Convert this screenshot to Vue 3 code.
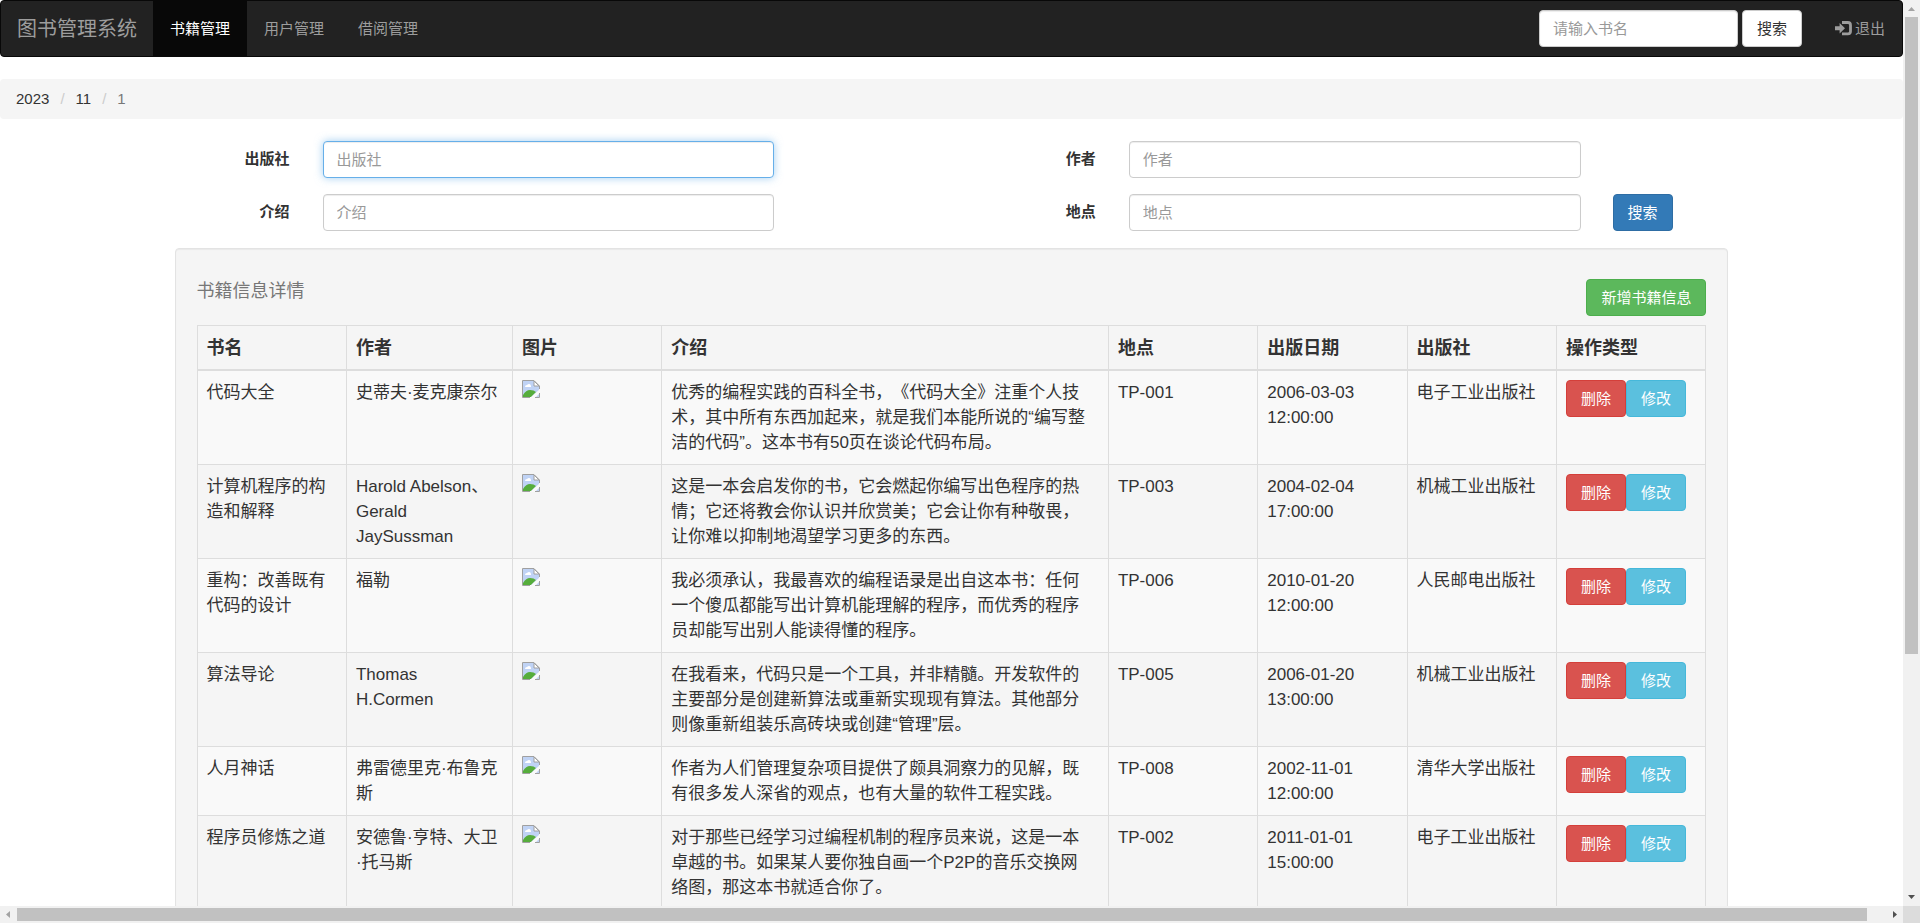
<script setup>
import { ref } from 'vue'

const navItems = ['书籍管理', '用户管理', '借阅管理']
const active = ref('书籍管理')
const crumbs = ['2023', '11', '1']
const keyword = ref('')
const publisher = ref('')
const author = ref('')
const intro = ref('')
const place = ref('')

const headers = ['书名', '作者', '图片', '介绍', '地点', '出版日期', '出版社', '操作类型']
const books = [
  { name: '代码大全', author: '史蒂夫·麦克康奈尔', intro: '优秀的编程实践的百科全书，《代码大全》注重个人技术，其中所有东西加起来，就是我们本能所说的“编写整洁的代码”。这本书有50页在谈论代码布局。', place: 'TP-001', date: '2006-03-03 12:00:00', publisher: '电子工业出版社' },
  { name: '计算机程序的构造和解释', author: 'Harold Abelson、Gerald JaySussman', intro: '这是一本会启发你的书，它会燃起你编写出色程序的热情；它还将教会你认识并欣赏美；它会让你有种敬畏，让你难以抑制地渴望学习更多的东西。', place: 'TP-003', date: '2004-02-04 17:00:00', publisher: '机械工业出版社' },
  { name: '重构：改善既有代码的设计', author: '福勒', intro: '我必须承认，我最喜欢的编程语录是出自这本书：任何一个傻瓜都能写出计算机能理解的程序，而优秀的程序员却能写出别人能读得懂的程序。', place: 'TP-006', date: '2010-01-20 12:00:00', publisher: '人民邮电出版社' },
  { name: '算法导论', author: 'Thomas\nH.Cormen', intro: '在我看来，代码只是一个工具，并非精髓。开发软件的主要部分是创建新算法或重新实现现有算法。其他部分则像重新组装乐高砖块或创建“管理”层。', place: 'TP-005', date: '2006-01-20 13:00:00', publisher: '机械工业出版社' },
  { name: '人月神话', author: '弗雷德里克·布鲁克斯', intro: '作者为人们管理复杂项目提供了颇具洞察力的见解，既有很多发人深省的观点，也有大量的软件工程实践。', place: 'TP-008', date: '2002-11-01 12:00:00', publisher: '清华大学出版社' },
  { name: '程序员修炼之道', author: '安德鲁·亨特、大卫·托马斯', intro: '对于那些已经学习过编程机制的程序员来说，这是一本卓越的书。如果某人要你独自画一个P2P的音乐交换网络图，那这本书就适合你了。', place: 'TP-002', date: '2011-01-01 15:00:00', publisher: '电子工业出版社' }
]
</script>

<template>
  <div class="window">
    <div class="page">
      <nav class="navbar">
        <a class="brand" href="#">图书管理系统</a>
        <a
          v-for="item in navItems"
          :key="item"
          href="#"
          class="nav-link"
          :class="{ active: item === active }"
          @click.prevent="active = item"
        >{{ item }}</a>
        <form class="nav-search" @submit.prevent>
          <input v-model="keyword" class="control" type="text" placeholder="请输入书名" aria-label="书名" />
          <button class="btn btn-default" type="submit">搜索</button>
        </form>
        <a class="nav-link logout" href="#">
          <svg class="logout-icon" viewBox="0 0 17 15" aria-hidden="true">
            <path d="M0 5.200h4.600V2L10 7.200l-5.400 5.200V9.200H0z" fill="currentColor" />
            <path d="M7 1.500h5.800q2.700 0 2.700 2.700v6q0 2.700-2.700 2.700H7" fill="none" stroke="currentColor" stroke-width="2.800" />
          </svg>
          <span>退出</span>
        </a>
      </nav>

      <ol class="breadcrumb">
        <li v-for="(c, i) in crumbs" :key="c">
          <a v-if="i < crumbs.length - 1" href="#">{{ c }}</a>
          <span v-else>{{ c }}</span>
        </li>
      </ol>

      <form class="filters" @submit.prevent>
        <label class="label-first" for="publisher">出版社</label>
        <input id="publisher" v-model="publisher" class="control field-first" type="text" placeholder="出版社" autofocus />
        <label class="label-second" for="author">作者</label>
        <input id="author" v-model="author" class="control field-second" type="text" placeholder="作者" />
        <label class="label-first" for="intro">介绍</label>
        <input id="intro" v-model="intro" class="control field-first" type="text" placeholder="介绍" />
        <label class="label-second" for="place">地点</label>
        <input id="place" v-model="place" class="control field-second" type="text" placeholder="地点" />
        <button class="btn btn-primary" type="submit">搜索</button>
      </form>

      <div class="row">
        <main class="well">
          <header class="well-head">
            <h1>书籍信息详情</h1>
            <button class="btn btn-success" type="button">新增书籍信息</button>
          </header>
          <table>
            <colgroup>
              <col class="narrow" />
              <col class="author" />
              <col class="narrow" />
              <col class="intro" />
              <col class="narrow" />
              <col class="narrow" />
              <col class="narrow" />
              <col class="narrow" />
            </colgroup>
            <thead>
              <tr>
                <th v-for="h in headers" :key="h" scope="col">{{ h }}</th>
              </tr>
            </thead>
            <tbody>
              <tr v-for="b in books" :key="b.name">
                <td>{{ b.name }}</td>
                <td class="author-cell">{{ b.author }}</td>
                <td>
                  <svg class="broken" viewBox="0 0 18 18" aria-hidden="true">
                    <path d="M1 1h11l5 5v11H1z" fill="#c0d3f5" />
                    <path d="M3 7q0-2 2-2 1-1 2-1 2 0 2 3z" fill="#fff" />
                    <path d="M1 17v-2q3-5 7-5 4 0 6 2l-5 5z" fill="#56ad3c" />
                    <path d="M8 18 18 9v4l-5 5z" fill="#fafafa" />
                    <path d="M12 1v5h5z" fill="#fff" stroke="#a0a0a0" />
                    <path d="M8 17.500H.5V.5H12l5.500 5.500v3M17.500 13v4.500H13" fill="none" stroke="#a0a0a0" />
                  </svg>
                </td>
                <td class="intro-cell">{{ b.intro }}</td>
                <td>{{ b.place }}</td>
                <td>{{ b.date }}</td>
                <td>{{ b.publisher }}</td>
                <td>
                  <div class="actions">
                    <button class="btn btn-danger" type="button">删除</button>
                    <button class="btn btn-info" type="button">修改</button>
                  </div>
                </td>
              </tr>
            </tbody>
          </table>
        </main>
      </div>
    </div>

    <div class="bar vertical" aria-hidden="true">
      <svg viewBox="0 0 17 17"><path d="M5 11h7L8.500 7z" fill="#a3a3a3" /></svg>
      <div class="track"><div class="thumb"></div></div>
      <svg viewBox="0 0 17 17"><path d="M5 6h7l-3.500 4z" fill="#505050" /></svg>
    </div>
    <div class="bar horizontal" aria-hidden="true">
      <svg viewBox="0 0 17 17"><path d="M10 5v7L6 8.500z" fill="#a3a3a3" /></svg>
      <div class="track"><div class="thumb"></div></div>
      <svg viewBox="0 0 17 17"><path d="M7 5v7l4-3.500z" fill="#505050" /></svg>
    </div>
    <div class="corner"></div>
  </div>
</template>

<style>
body {
  margin: 0;
  background: #fff;
}
</style>

<style scoped>
* {
  box-sizing: border-box;
}
.window {
  display: grid;
  grid-template-columns: minmax(0, 1fr) 17px;
  grid-template-rows: minmax(0, 1fr) 17px;
  height: 100vh;
  font: 15px/22px "Liberation Sans", "Noto Sans CJK SC", sans-serif;
  text-spacing-trim: space-all;
  color: #333;
}
.page {
  overflow: hidden;
}
a {
  color: #333;
  text-decoration: none;
}
.navbar {
  display: flex;
  align-items: center;
  height: 57px;
  border: 1px solid #080808;
  border-radius: 4px;
  background: #222;
}
.navbar a {
  color: #9d9d9d;
}
.brand {
  padding: 0 16px;
  font-size: 20px;
}
.nav-link {
  padding: 0 17px;
  line-height: 55px;
}
.navbar .active {
  background: #080808;
  color: #fff;
}
.nav-search {
  display: flex;
  gap: 4px;
  margin-left: auto;
  padding-right: 16px;
}
.nav-search .control {
  width: 199px;
}
.logout {
  display: flex;
  align-items: center;
  gap: 3px;
}
.logout-icon {
  width: 17px;
  height: 15px;
}
.control {
  width: 100%;
  height: 37px;
  padding: 6px 13px;
  border: 1px solid #ccc;
  border-radius: 4px;
  background: #fff;
  box-shadow: inset 0 1px 1px rgba(0, 0, 0, 0.075);
  color: #555;
  font: inherit;
}
.control::placeholder {
  color: #999;
  opacity: 1;
}
.control:focus,
#publisher {
  outline: 0;
  border-color: #66afe9;
  box-shadow: inset 0 1px 1px rgba(0, 0, 0, 0.075), 0 0 8px rgba(102, 175, 233, 0.6);
}
.btn {
  height: 37px;
  padding: 0 14px;
  border: 1px solid transparent;
  border-radius: 4px;
  color: #fff;
  font: inherit;
  white-space: nowrap;
  cursor: pointer;
}
.btn-default {
  border-color: #ccc;
  background: #fff;
  color: #333;
}
.btn-primary {
  grid-column: 11;
  justify-self: start;
  border-color: #2e6da4;
  background: #337ab7;
}
.btn-success {
  border-color: #4cae4c;
  background: #5cb85c;
}
.btn-danger {
  border-color: #d43f3a;
  background: #d9534f;
}
.btn-info {
  border-color: #46b8da;
  background: #5bc0de;
}
.breadcrumb {
  display: flex;
  margin: 22px 0;
  padding: 9px 16px;
  border-radius: 4px;
  background: #f5f5f5;
  list-style: none;
}
.breadcrumb li + li::before {
  content: "/";
  padding: 0 11px;
  color: #ccc;
}
.breadcrumb span {
  color: #777;
}
.filters {
  display: grid;
  grid-template-columns: repeat(12, minmax(0, 1fr));
  row-gap: 16px;
  margin: 0 -16px 17px;
}
.filters label {
  padding: 7px 17px 0 0;
  font-weight: bold;
  text-align: right;
}
.filters .control {
  width: auto;
}
.filters .control,
.filters .btn {
  margin: 0 16px;
}
.label-first {
  grid-column: 2;
}
.field-first {
  grid-column: 3 / span 3;
}
.label-second {
  grid-column: 6 / span 2;
}
.field-second {
  grid-column: 8 / span 3;
}
.row {
  display: grid;
  grid-template-columns: repeat(12, minmax(0, 1fr));
}
.well {
  grid-column: 2 / span 10;
  margin: 0 16px;
  padding: 21px;
  border: 1px solid #e3e3e3;
  border-radius: 4px;
  background: #f5f5f5;
  box-shadow: inset 0 1px 1px rgba(0, 0, 0, 0.05);
}
.well-head {
  display: flex;
  align-items: flex-end;
  justify-content: space-between;
  height: 46px;
  margin-bottom: 9px;
}
.well-head h1 {
  align-self: flex-start;
  margin: 0;
  padding-top: 9px;
  color: #777;
  font-size: 18px;
  font-weight: normal;
  line-height: 25px;
}
table {
  width: 100%;
  table-layout: fixed;
  border-collapse: collapse;
  font-size: 17px;
  line-height: 25px;
}
.narrow {
  width: 9.9%;
}
.author {
  width: 11%;
}
.intro {
  width: 29.6%;
}
th,
td {
  padding: 9px 8px 9px 9px;
  border: 1px solid #ddd;
  text-align: left;
  vertical-align: top;
}
th {
  padding-top: 10px;
  padding-bottom: 8px;
  border-bottom-width: 2px;
  font-size: 18px;
}
.author-cell {
  padding-right: 12px;
  white-space: pre-line;
}
.intro-cell {
  padding-right: 16px;
}
tbody tr:nth-child(odd) {
  background: #f9f9f9;
}
.broken {
  display: block;
  width: 18px;
  height: 18px;
}
.actions {
  display: flex;
  font-size: 15px;
}
.bar {
  display: flex;
  background: #f1f1f1;
}
.bar svg {
  flex: none;
  width: 17px;
  height: 17px;
}
.track {
  flex: 1;
}
.thumb {
  background: #c1c1c1;
}
.vertical {
  flex-direction: column;
}
.vertical .track {
  padding: 0 2px;
}
.vertical .thumb {
  height: 73%;
}
.horizontal .track {
  padding: 2px 0;
}
.horizontal .thumb {
  width: 99%;
  height: 13px;
}
.corner {
  background: #dcdcdc;
}
</style>
